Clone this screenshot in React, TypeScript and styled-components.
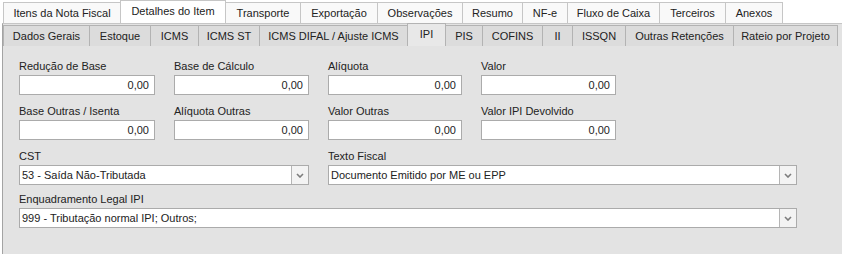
import React from "react";
import styled, { createGlobalStyle } from "styled-components";

const Global = createGlobalStyle`
  html, body { margin: 0; padding: 0; background: #ffffff; }
  body { font-family: "Liberation Sans", Arial, sans-serif; font-size: 11px; color: #222; }
`;

const Screen = styled.div`
  width: 842px;
  height: 254px;
  overflow: hidden;
  background: #ffffff;
  display: flex;
  flex-direction: column;
`;

const TopBar = styled.div`
  display: flex;
  align-items: flex-end;
  height: 23px;
  padding-left: 3px;
  box-sizing: border-box;
`;

const TopTab = styled.div<{ $w: number; $active?: boolean }>`
  width: ${(p) => p.$w}px;
  height: ${(p) => (p.$active ? 23 : 21)}px;
  padding-bottom: ${(p) => (p.$active ? 2 : 0)}px;
  box-sizing: border-box;
  margin-left: -1px;
  border: 1px solid #c6c6c6;
  border-bottom: none;
  background: ${(p) => (p.$active ? "#ffffff" : "#f9f9f9")};
  display: flex;
  align-items: center;
  justify-content: center;
  white-space: nowrap;
  color: #222;
  &:first-child { margin-left: 0; }
`;

const Panel = styled.div`
  flex: 1;
  margin-left: 2px;
  border-left: 1px solid #a3a3a3;
  border-top: 1px solid #c6c6c6;
  background: #e3e3e3;
  display: flex;
  flex-direction: column;
`;

const SubBar = styled.div`
  display: flex;
  align-items: flex-end;
  height: 22px;
  padding-left: 0px;
`;

const SubTab = styled.div<{ $w: number; $active?: boolean }>`
  width: ${(p) => p.$w}px;
  height: ${(p) => (p.$active ? 23 : 21)}px;
  padding-bottom: ${(p) => (p.$active ? 2 : 0)}px;
  box-sizing: border-box;
  margin-left: -1px;
  border: 1px solid #b3b3b3;
  border-bottom: none;
  background: ${(p) => (p.$active ? "#e8e8e8" : "#dcdcdc")};
  display: flex;
  align-items: center;
  justify-content: center;
  white-space: nowrap;
  color: #222;
  &:first-child { margin-left: 0; }
`;

const Form = styled.div`
  display: flex;
  flex-direction: column;
  gap: 10px;
  padding: 14px 0 0 16px;
`;

const Row = styled.div<{ $cols: string; $gap: number; $pull?: number }>`
  display: grid;
  grid-template-columns: ${(p) => p.$cols};
  column-gap: ${(p) => p.$gap}px;
  margin-top: ${(p) => -(p.$pull || 0)}px;
`;

const Field = styled.div`
  display: flex;
  flex-direction: column;
`;

const Label = styled.div`
  height: 13px;
  line-height: 13px;
  margin-bottom: 2px;
  white-space: nowrap;
  color: #222;
`;

const NumBox = styled.div`
  height: 20px;
  box-sizing: border-box;
  border: 1px solid #ababab;
  background: #ffffff;
  display: flex;
  align-items: center;
  justify-content: flex-end;
  padding-right: 5px;
  color: #222;
`;

const Combo = styled.div`
  height: 20px;
  box-sizing: border-box;
  border: 1px solid #ababab;
  background: #ffffff;
  display: flex;
  align-items: stretch;
`;

const ComboText = styled.div`
  flex: 1;
  display: flex;
  align-items: center;
  padding-left: 2px;
  white-space: nowrap;
  overflow: hidden;
  color: #222;
`;

const ComboButton = styled.div`
  width: 16px;
  border-left: 1px solid #b5b5b5;
  background: #f3f3f3;
  display: flex;
  align-items: center;
  justify-content: center;
`;

const Chevron = () => (
  <svg width="8" height="5" viewBox="0 0 8 5">
    <path d="M1 1 L4 4 L7 1" fill="none" stroke="#7c7c7c" strokeWidth="1.6" />
  </svg>
);

const topTabs: [string, number][] = [
  ["Itens da Nota Fiscal", 118],
  ["Detalhes do Item", 106],
  ["Transporte", 76],
  ["Exportação", 78],
  ["Observações", 86],
  ["Resumo", 61],
  ["NF-e", 46],
  ["Fluxo de Caixa", 93],
  ["Terceiros", 67],
  ["Anexos", 58],
];

const subTabs: [string, number][] = [
  ["Dados Gerais", 87],
  ["Estoque", 62],
  ["ICMS", 49],
  ["ICMS ST", 62],
  ["ICMS DIFAL / Ajuste ICMS", 149],
  ["IPI", 39],
  ["PIS", 38],
  ["COFINS", 61],
  ["II", 31],
  ["ISSQN", 54],
  ["Outras Retenções", 109],
  ["Rateio por Projeto", 105],
];

const row1 = ["Redução de Base", "Base de Cálculo", "Alíquota", "Valor"];
const row2 = ["Base Outras / Isenta", "Alíquota Outras", "Valor Outras", "Valor IPI Devolvido"];

export default function App() {
  return (
    <>
      <Global />
      <Screen>
        <TopBar>
          {topTabs.map(([t, w]) => (
            <TopTab key={t} $w={w} $active={t === "Detalhes do Item"}>
              {t}
            </TopTab>
          ))}
        </TopBar>
        <Panel>
          <SubBar>
            {subTabs.map(([t, w]) => (
              <SubTab key={t} $w={w} $active={t === "IPI"}>
                {t}
              </SubTab>
            ))}
          </SubBar>
          <Form>
            {[row1, row2].map((r, i) => (
              <Row key={i} $cols="136px 135px 134px 135px" $gap={19}>
                {r.map((l) => (
                  <Field key={l}>
                    <Label>{l}</Label>
                    <NumBox>0,00</NumBox>
                  </Field>
                ))}
              </Row>
            ))}
            <Row $cols="290px 469px" $gap={19}>
              <Field>
                <Label>CST</Label>
                <Combo>
                  <ComboText>53 - Saída Não-Tributada</ComboText>
                  <ComboButton>
                    <Chevron />
                  </ComboButton>
                </Combo>
              </Field>
              <Field>
                <Label>Texto Fiscal</Label>
                <Combo>
                  <ComboText>Documento Emitido por ME ou EPP</ComboText>
                  <ComboButton>
                    <Chevron />
                  </ComboButton>
                </Combo>
              </Field>
            </Row>
            <Row $cols="778px" $gap={0} $pull={2}>
              <Field>
                <Label>Enquadramento Legal IPI</Label>
                <Combo>
                  <ComboText>999 - Tributação normal IPI; Outros;</ComboText>
                  <ComboButton>
                    <Chevron />
                  </ComboButton>
                </Combo>
              </Field>
            </Row>
          </Form>
        </Panel>
      </Screen>
    </>
  );
}
